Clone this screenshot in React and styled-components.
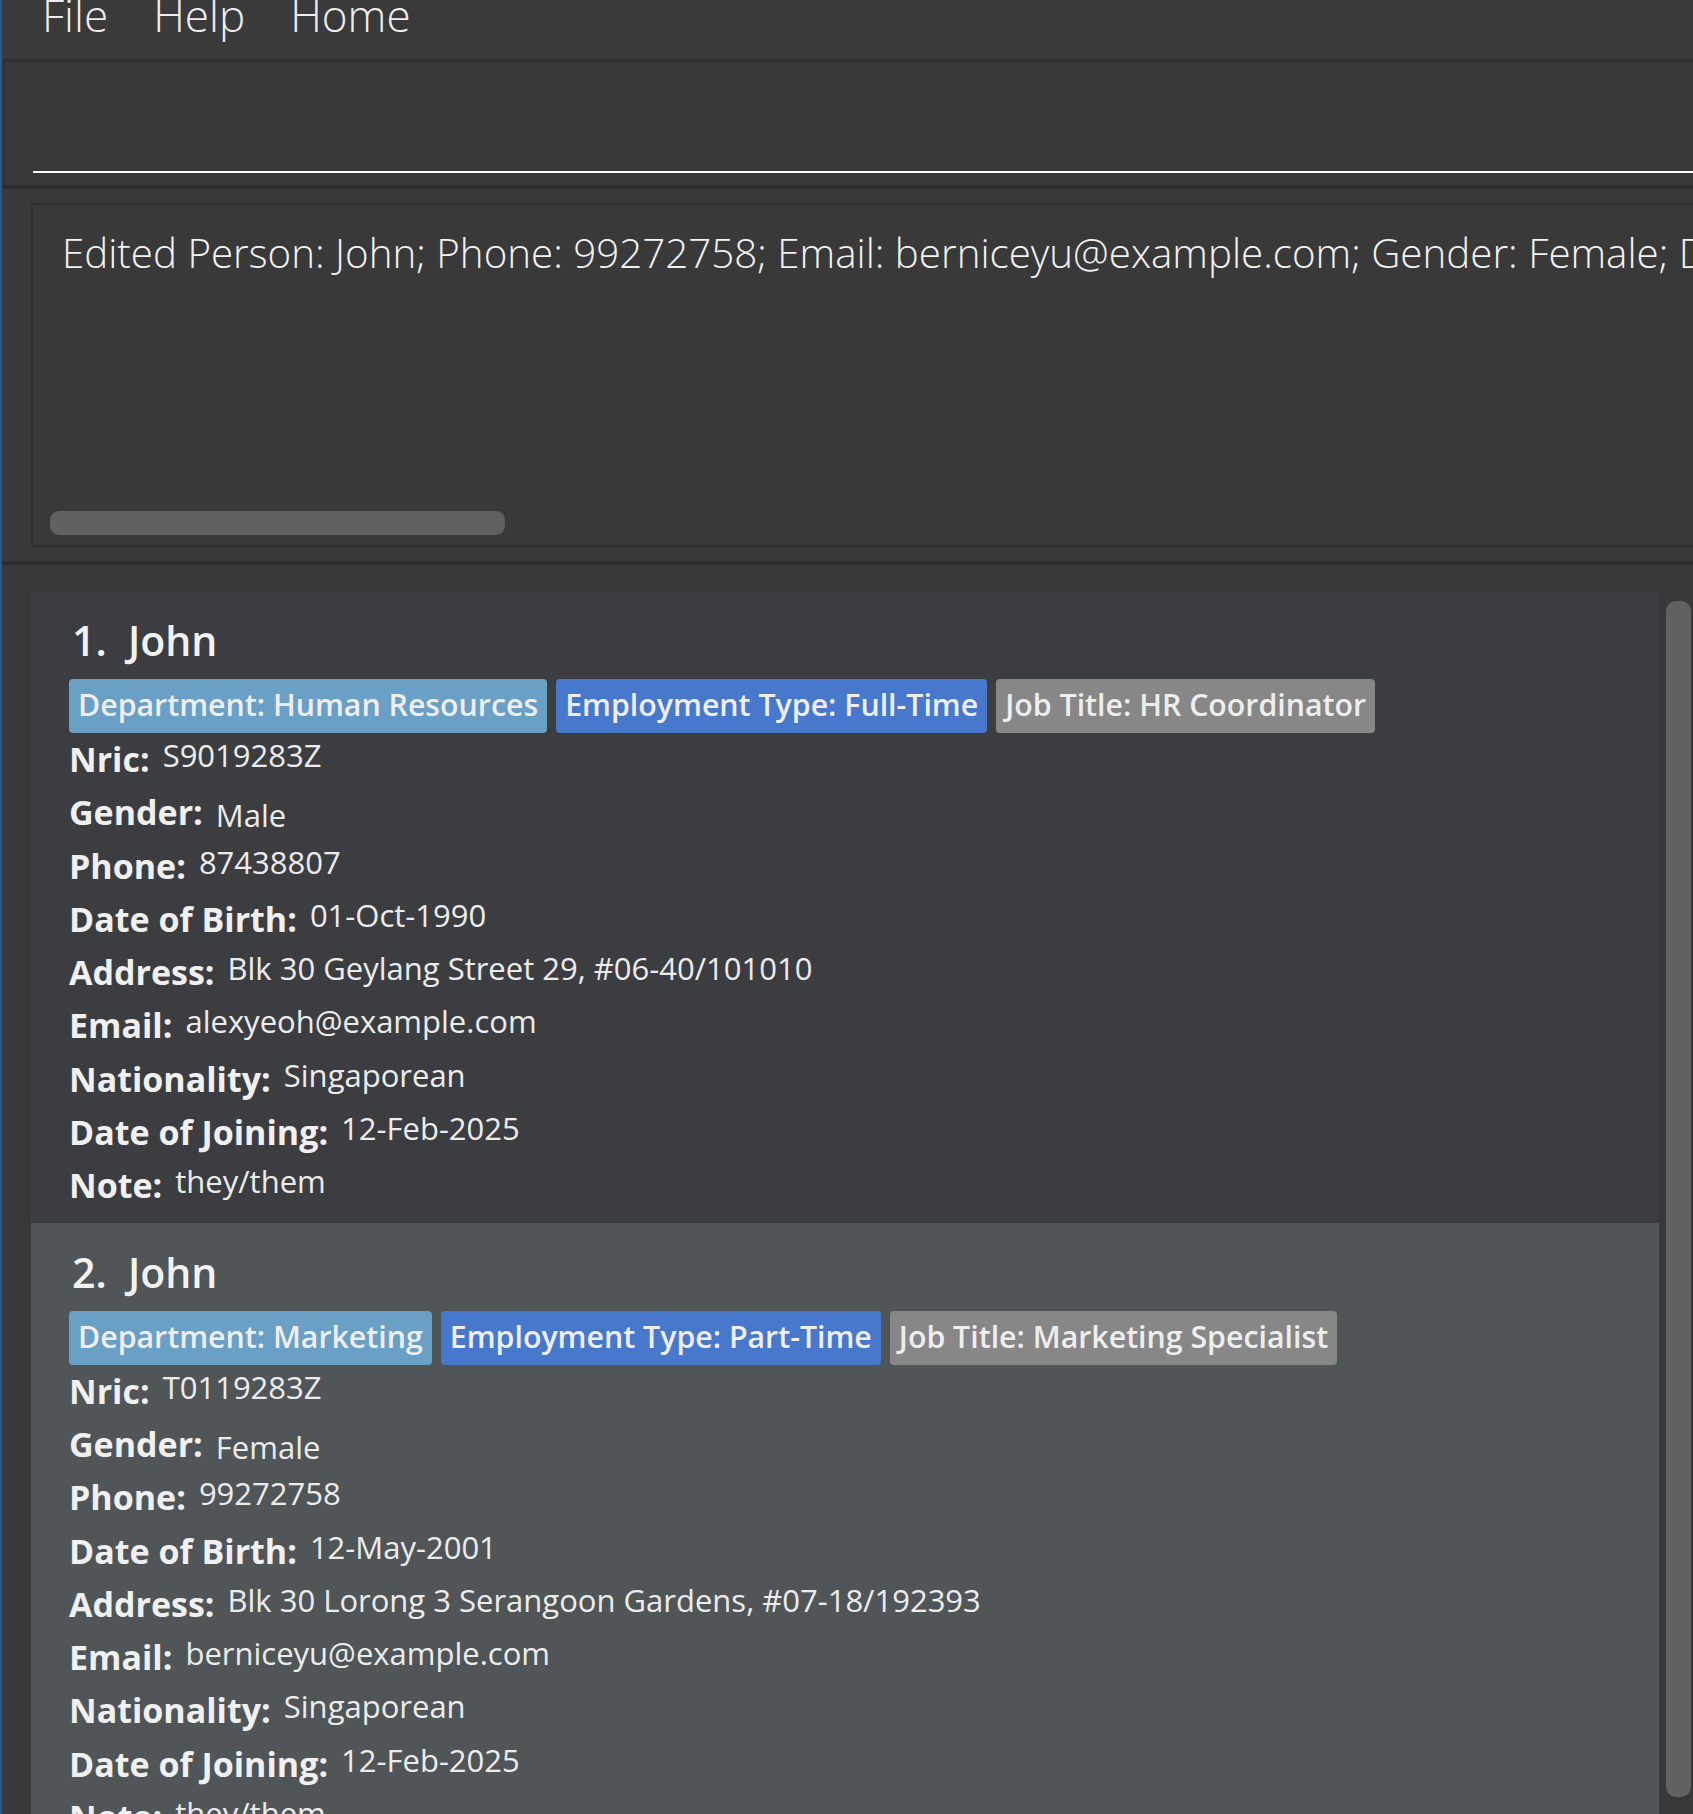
import React from 'react'
import styled, { createGlobalStyle } from 'styled-components'

const GlobalStyle = createGlobalStyle`
  html, body {
    margin: 0;
    padding: 0;
    background: #333333;
  }
  body {
    font-family: 'Open Sans', 'Noto Sans', sans-serif;
  }
`

const Window = styled.div`
  width: 1693px;
  height: 1814px;
  overflow: hidden;
  box-sizing: border-box;
  border-left: 2px solid #1f5c9c;
  background: #333333;
  display: flex;
  flex-direction: column;
  color: #f0f0f0;
`

const MenuBar = styled.div`
  flex: none;
  height: 59px;
  display: flex;
  gap: 45px;
  padding-left: 40px;
  background: #3a3a3a;
  border-bottom: 2px solid #303030;
  overflow: hidden;
`

const MenuItem = styled.span`
  font-size: 44px;
  font-weight: 300;
  line-height: 44px;
  margin-top: -7px;
  color: #eeeeee;
`

const CommandPanel = styled.div`
  flex: none;
  height: 124px;
  box-sizing: border-box;
  margin-left: 2px;
  padding-left: 27px;
  background: #393939;
  border-top: 2px solid #323232;
  border-left: 2px solid #323232;
`

const CommandInput = styled.div`
  height: 108px;
  border-bottom: 2px solid #ffffff;
`

const Divider = styled.div`
  flex: none;
  height: 4px;
  background: #2d2d2d;
`

const ResultPanel = styled.div`
  flex: none;
  height: 372px;
  box-sizing: border-box;
  padding: 14px 0 14px 29px;
  background: #393939;
  overflow: hidden;
`

const ResultBox = styled.div`
  width: 1720px;
  height: 344px;
  box-sizing: border-box;
  border: 2px solid #2f2f2f;
  background: #393939;
  display: flex;
  flex-direction: column;
  justify-content: space-between;
`

const ResultText = styled.div`
  padding: 20px 0 0 29px;
  font-size: 40.3px;
  font-weight: 300;
  white-space: nowrap;
  color: #f2f2f2;
`

const HThumb = styled.div`
  width: 455px;
  height: 24px;
  margin: 0 0 10px 17px;
  border-radius: 9px;
  background: #616161;
`

const ListPanel = styled.div`
  flex: 1;
  min-height: 0;
  display: flex;
  gap: 7px;
  padding: 26px 0 0 29px;
  background: #383838;
  overflow: hidden;
`

const CardColumn = styled.div`
  width: 1628px;
  flex: none;
  display: flex;
  flex-direction: column;
`

const VThumb = styled.div`
  flex: none;
  width: 25px;
  height: 1196px;
  margin-top: 10px;
  border-radius: 10px;
  background: #616161;
`

const Card = styled.div`
  padding: 22px 0 10px 38px;
  background: ${p => (p.$selected ? '#505558' : '#3c3d40')};
`

const Name = styled.div`
  padding-left: 3px;
  font-size: 41px;
  font-weight: 600;
  line-height: 55px;
  white-space: pre;
  color: #f2f2f2;
`

const Tags = styled.div`
  display: flex;
  gap: 9px;
  margin-top: 11px;
`

const Tag = styled.span`
  height: 54px;
  box-sizing: border-box;
  padding: 0 9px 3px;
  border-radius: 4px;
  font-size: 30.3px;
  font-weight: 600;
  line-height: 51px;
  white-space: nowrap;
  color: #eeeeee;
  background: ${p => p.$bg};
`

const Row = styled.div`
  display: flex;
  align-items: flex-start;
  gap: 13px;
`

const Label = styled.span`
  font-size: 34px;
  font-weight: 700;
  line-height: 53.3px;
  color: #f0f0f0;
`

const Value = styled.span`
  font-size: 31px;
  font-weight: 400;
  line-height: 44.4px;
  margin-top: ${p => (p.$drop ? '7px' : '0')};
  color: #ececec;
`

const tagColors = {
  dept: '#6a9fc6',
  type: '#4778cc',
  title: '#878787',
}

const people = [
  {
    name: 'John',
    dept: 'Human Resources',
    type: 'Full-Time',
    title: 'HR Coordinator',
    nric: 'S9019283Z',
    gender: 'Male',
    phone: '87438807',
    dob: '01-Oct-1990',
    address: 'Blk 30 Geylang Street 29, #06-40/101010',
    email: 'alexyeoh@example.com',
    nationality: 'Singaporean',
    doj: '12-Feb-2025',
    note: 'they/them',
  },
  {
    name: 'John',
    dept: 'Marketing',
    type: 'Part-Time',
    title: 'Marketing Specialist',
    nric: 'T0119283Z',
    gender: 'Female',
    phone: '99272758',
    dob: '12-May-2001',
    address: 'Blk 30 Lorong 3 Serangoon Gardens, #07-18/192393',
    email: 'berniceyu@example.com',
    nationality: 'Singaporean',
    doj: '12-Feb-2025',
    note: 'they/them',
    selected: true,
  },
]

const PersonCard = ({ index, person }) => {
  const fields = [
    ['Nric:', person.nric],
    ['Gender:', person.gender, true],
    ['Phone:', person.phone],
    ['Date of Birth:', person.dob],
    ['Address:', person.address],
    ['Email:', person.email],
    ['Nationality:', person.nationality],
    ['Date of Joining:', person.doj],
    ['Note:', person.note],
  ]
  return (
    <Card $selected={person.selected}>
      <Name>{`${index}.  ${person.name}`}</Name>
      <Tags>
        <Tag $bg={tagColors.dept}>Department: {person.dept}</Tag>
        <Tag $bg={tagColors.type}>Employment Type: {person.type}</Tag>
        <Tag $bg={tagColors.title}>Job Title: {person.title}</Tag>
      </Tags>
      {fields.map(([label, value, drop]) => (
        <Row key={label}>
          <Label>{label}</Label>
          <Value $drop={drop}>{value}</Value>
        </Row>
      ))}
    </Card>
  )
}

const App = () => (
  <Window>
    <GlobalStyle />
    <MenuBar>
      <MenuItem>File</MenuItem>
      <MenuItem>Help</MenuItem>
      <MenuItem>Home</MenuItem>
    </MenuBar>
    <CommandPanel>
      <CommandInput />
    </CommandPanel>
    <Divider />
    <ResultPanel>
      <ResultBox>
        <ResultText>
          Edited Person: John; Phone: 99272758; Email: berniceyu@example.com; Gender: Female; Date of Birth:
          12-May-2001; Address: Blk 30 Lorong 3 Serangoon Gardens, #07-18/192393
        </ResultText>
        <HThumb />
      </ResultBox>
    </ResultPanel>
    <Divider />
    <ListPanel>
      <CardColumn>
        {people.map((p, i) => (
          <PersonCard key={i} index={i + 1} person={p} />
        ))}
      </CardColumn>
      <VThumb />
    </ListPanel>
  </Window>
)

export default App
